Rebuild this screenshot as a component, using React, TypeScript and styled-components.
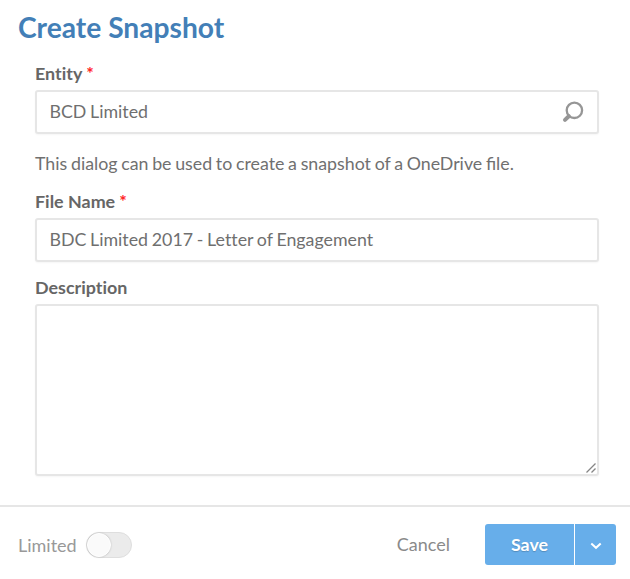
import React from "react";
import styled, { createGlobalStyle, css } from "styled-components";

const GlobalStyle = createGlobalStyle`
  * { box-sizing: border-box; }
  body { margin: 0; background: #fff; }
`;

const Dialog = styled.main`
  display: flex;
  flex-direction: column;
  width: 630px;
  height: 579px;
  overflow: hidden;
  background: #fff;
  color: #6b6b6b;
  font-family: Lato, sans-serif;
  font-size: 18px;
  font-variant-ligatures: none;
`;

const Title = styled.h1`
  margin: 0;
  padding: 9px 18px 0;
  height: 63px;
  color: #437fb7;
  font-size: 28.2px;
  font-weight: 700;
  line-height: 36px;
  white-space: nowrap;
`;

const Form = styled.form`
  display: flex;
  flex-direction: column;
  flex: 1;
  padding: 0 31px 0 35px;
`;

const Label = styled.label`
  display: block;
  height: 27px;
  color: #666;
  font-size: 17.9px;
  font-weight: 700;
  line-height: 21px;
`;

const Required = styled.span`
  margin-left: 4px;
  color: #ff2525;
  font-size: 17.8px;
  font-weight: 700;
  line-height: 1;
`;

const fieldFrame = css`
  border: 2px solid #e6e6e6;
  border-radius: 3px;
  background: #fff;
  box-shadow: 0 1px 2px rgba(0, 0, 0, 0.04);
`;

const Field = styled.div`
  ${fieldFrame}
  display: flex;
  align-items: center;
  height: 44px;
  padding-right: 13px;
`;

const Input = styled.input`
  flex: 1;
  min-width: 0;
  height: 100%;
  padding: 0 0 2px 12.4px;
  border: 0;
  outline: 0;
  background: transparent;
  color: #6f6f6f;
  font: 400 17.8px Lato, sans-serif;
  font-variant-ligatures: none;
  word-spacing: -0.8px;
`;

const Hint = styled.p`
  margin: 0;
  height: 57px;
  padding-top: 18px;
  color: #707070;
  font-size: 17.8px;
  font-variant-ligatures: normal;
  line-height: 22px;
  white-space: nowrap;
  word-spacing: -0.85px;
`;

const Spacer = styled.div`
  height: 15px;
`;

const AreaFrame = styled.div`
  ${fieldFrame}
  display: flex;
  align-items: flex-end;
  height: 172px;
`;

const Area = styled.textarea`
  flex: 1;
  height: 100%;
  padding: 10px 13px;
  border: 0;
  outline: 0;
  resize: none;
  background: transparent;
  color: #6f6f6f;
  font: 400 17.8px Lato, sans-serif;
`;

const Grip = styled.svg`
  flex: none;
  margin: 0 1px 1px 0;
`;

const Footer = styled.footer`
  display: flex;
  align-items: flex-start;
  height: 74px;
  padding: 17px 14px 0 18px;
  border-top: 2px solid #e6e6e6;
`;

const ToggleLabel = styled.span`
  width: 68px;
  color: #999;
  font-size: 18px;
  line-height: 43px;
`;

const Toggle = styled.button`
  display: flex;
  width: 46px;
  height: 26px;
  margin-top: 8px;
  padding: 0;
  border: 1px solid #dedede;
  border-radius: 13px;
  background: #ebebeb;
`;

const Knob = styled.span`
  width: 24px;
  height: 24px;
  border-radius: 50%;
  background: #fafafa;
  border: 1px solid #fff;
  box-shadow: 0 0 2px rgba(0, 0, 0, 0.2);
`;

const Actions = styled.div`
  display: flex;
  margin-left: auto;
`;

const Cancel = styled.button`
  margin-right: 35px;
  padding: 0;
  border: 0;
  background: transparent;
  color: #8a8a8a;
  font: 400 18px/41px Lato, sans-serif;
`;

const PrimaryButton = styled.button<{ $side: "left" | "right" }>`
  display: flex;
  align-items: center;
  justify-content: center;
  width: ${({ $side }) => ($side === "left" ? 89 : 41)}px;
  height: 41px;
  margin-left: ${({ $side }) => ($side === "left" ? 0 : 1)}px;
  padding: ${({ $side }) => ($side === "left" ? "0 0 1px" : "2px 0 0")};
  border: 0;
  border-radius: ${({ $side }) => ($side === "left" ? "3px 0 0 3px" : "0 3px 3px 0")};
  background: #67aeea;
  color: #fff;
  font: 700 17.8px Lato, sans-serif;
  text-shadow: 0 1px 1px rgba(0, 0, 0, 0.2);
`;

export default function App() {
  return (
    <>
      <GlobalStyle />
      <Dialog>
        <Title>Create Snapshot</Title>
        <Form>
          <Label htmlFor="entity">
            Entity<Required>*</Required>
          </Label>
          <Field>
            <Input id="entity" defaultValue="BCD Limited" />
            <svg width="22" height="22" viewBox="0 0 22 22" fill="none" stroke="#969696">
              <circle cx="12.4" cy="9.3" r="7.7" strokeWidth="2.3" />
              <path d="M6.8 15.2 3 18.9" strokeWidth="4" strokeLinecap="round" />
            </svg>
          </Field>
          <Hint>This dialog can be used to create a snapshot of a OneDrive file.</Hint>
          <Label htmlFor="file-name">
            File Name<Required>*</Required>
          </Label>
          <Field>
            <Input id="file-name" defaultValue="BDC Limited 2017 - Letter of Engagement" />
          </Field>
          <Spacer />
          <Label htmlFor="description">Description</Label>
          <AreaFrame>
            <Area id="description" />
            <Grip width="10" height="10" viewBox="0 0 10 10" stroke="#858585" strokeWidth="1.3">
              <path d="M.5 9.5 9.5.5M5.5 9.5l4-4" />
            </Grip>
          </AreaFrame>
        </Form>
        <Footer>
          <ToggleLabel>Limited</ToggleLabel>
          <Toggle type="button" role="switch" aria-checked="false" aria-label="Limited">
            <Knob />
          </Toggle>
          <Actions>
            <Cancel type="button">Cancel</Cancel>
            <PrimaryButton type="button" $side="left">Save</PrimaryButton>
            <PrimaryButton type="button" $side="right" aria-label="More save options">
              <svg width="12" height="8" viewBox="0 0 12 8" fill="none" stroke="#fff" strokeWidth="2">
                <path d="m1.3 1.5 4.7 4.3 4.7-4.3" />
              </svg>
            </PrimaryButton>
          </Actions>
        </Footer>
      </Dialog>
    </>
  );
}
